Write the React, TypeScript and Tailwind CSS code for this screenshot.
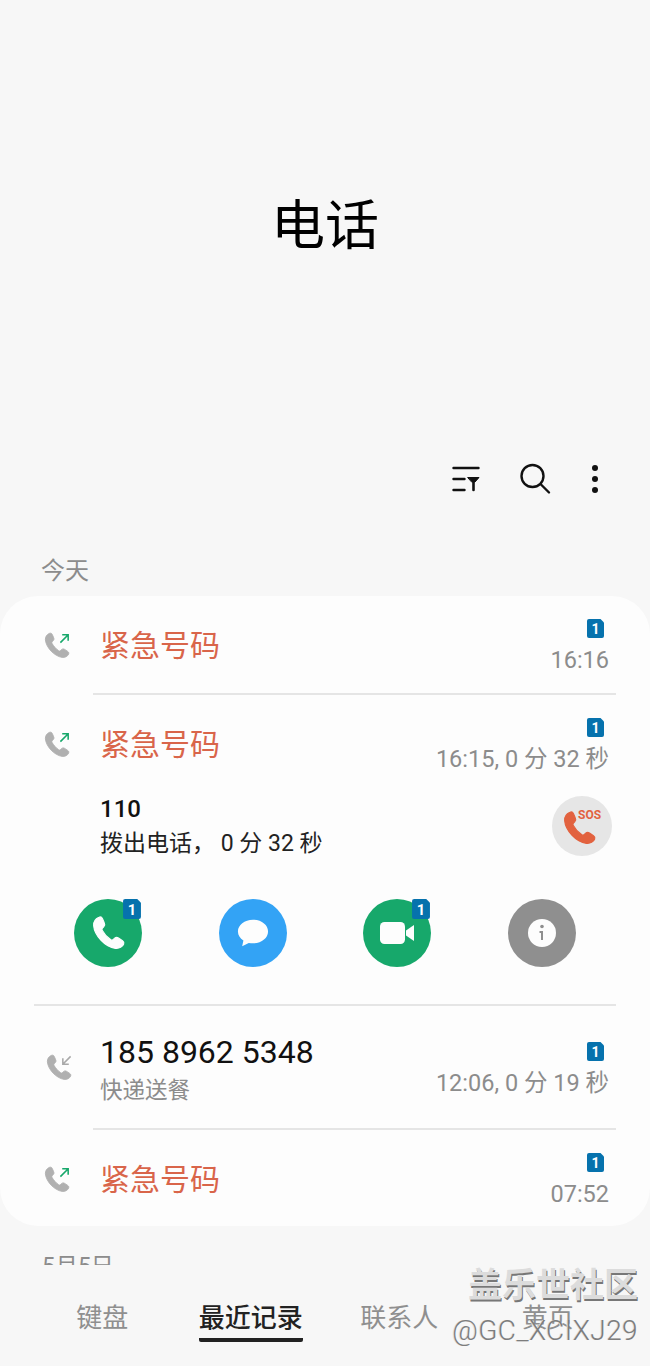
import React from 'react';

const font = { fontFamily: 'Roboto, "Noto Sans CJK SC", sans-serif' };

function Handset({ color, className }: { color: string; className?: string }) {
  return (
    <svg viewBox="0 0 24 24" className={className} fill="none">
      <path d="M6.600 2.600C4.600 3.500 3.200 5.200 3.400 7.600 3.900 13.600 10.400 20.400 16.400 21.200 18.800 21.500 20.800 20.200 21.400 18.600 21.700 17.800 21.400 17.100 20.700 16.600L18.300 15C17.500 14.500 16.700 14.500 16 15.100L14.900 16.100C14.500 16.400 14.100 16.400 13.700 16.100 11.600 14.600 9.600 12.400 8.500 10.300 8.300 9.900 8.300 9.500 8.700 9.100L9.500 8.200C10.100 7.600 10.200 6.800 9.800 6L8.700 3.400C8.300 2.600 7.400 2.200 6.600 2.600Z" fill={color} stroke={color} strokeWidth="0.700" strokeLinejoin="round" />
    </svg>
  );
}

function CallIcon({ incoming }: { incoming?: boolean }) {
  return (
    <div className="relative w-[26px] h-[26px] shrink-0">
      <Handset color="#b0b0b0" className="absolute left-[-3px] top-[-2px] w-[31px] h-[31px]" />
      <svg viewBox="0 0 12 12" className="absolute right-0 top-[1px] w-[11px] h-[11px]" fill="none" strokeWidth="1.700" stroke={incoming ? '#a9a9a9' : '#17a86b'}>
        {incoming ? <path d="M10.500 1.500 2.500 9.500M2 3.500v6.500h6.500" /> : <path d="M1.500 10.500l8-8M3.500 2h6.500v6.500" />}
      </svg>
    </div>
  );
}

function Sim({ className }: { className?: string }) {
  return (
    <svg viewBox="0 0 17 19" className={className}>
      <path d="M2 0H13.500L17 3.500V17a2 2 0 0 1-2 2H2a2 2 0 0 1-2-2V2a2 2 0 0 1 2-2Z" fill="#0672ad" />
      <text x="8.500" y="15" textAnchor="middle" fontSize="14" fontWeight="700" fill="#fff" fontFamily="Roboto, sans-serif">1</text>
    </svg>
  );
}

function Meta({ time }: { time: string }) {
  return (
    <div className="flex flex-col items-end shrink-0 mt-[3px]">
      <Sim className="w-[17px] h-[19px] mr-[5px]" />
      <div className="text-[23.500px] leading-[28px] mt-[8px] text-[#8c8c8c]">{time}</div>
    </div>
  );
}

function Emergency({ time, height }: { time: string; height: string }) {
  return (
    <div className={`flex items-center pl-[44px] pr-[41px] ${height}`}>
      <CallIcon />
      <div className="ml-[30px] mt-[2px] flex-1 text-[30px] leading-[40px] text-[#d9654a]">紧急号码</div>
      <Meta time={time} />
    </div>
  );
}

function Action({ bg, sim, children }: { bg: string; sim?: boolean; children: React.ReactNode }) {
  return (
    <div className="flex justify-center">
      <div className={`relative w-[68px] h-[68px] rounded-full flex items-center justify-center ${bg}`}>
        {children}
        {sim && <Sim className="absolute right-[1px] top-0 w-[18px] h-[20px]" />}
      </div>
    </div>
  );
}

const tabs = ['键盘', '最近记录', '联系人', '黄页'];

export default function App() {
  return (
    <div className="relative h-[1366px] w-[650px] overflow-hidden bg-[#f7f7f7] text-black" style={font}>
      {/* header */}
      <div className="h-[447px] flex items-end justify-center">
        <h1 className="text-[54px] leading-[70px] mb-[185px] font-normal">电话</h1>
      </div>
      <div className="h-[64px] flex items-center justify-end pr-[38px]">
        <svg viewBox="0 0 28 26" className="w-[28px] h-[26px]" fill="#111" stroke="#111" strokeWidth="2.400" strokeLinecap="round">
          <path d="M1.500 2h25M1.500 13h11M1.500 24h11" fill="none" />
          <path d="M16 11.500h11l-4 4.500h-3Z" strokeWidth="1" />
          <path d="M21.500 15v9" fill="none" strokeWidth="2.600" />
        </svg>
        <svg viewBox="0 0 32 32" className="w-[32px] h-[32px] ml-[39px]" fill="none" stroke="#111" strokeWidth="2.400" strokeLinecap="round">
          <circle cx="13.500" cy="13" r="11" />
          <path d="M22 21.500l8 8" />
        </svg>
        <div className="ml-[41px] w-[6px] flex flex-col gap-[5px] mr-[14px]">
          <div className="w-[6px] h-[6px] rounded-full bg-[#111]" />
          <div className="w-[6px] h-[6px] rounded-full bg-[#111]" />
          <div className="w-[6px] h-[6px] rounded-full bg-[#111]" />
        </div>
      </div>
      <div className="h-[85px] flex items-end pl-[41px] pb-[8px] text-[24px] leading-[34px] text-[#8c8c8c]">今天</div>

      {/* call log */}
      <div className="h-[630px] bg-[#fdfdfd] rounded-[38px] overflow-hidden">
        <Emergency time="16:16" height="h-[97px]" />
        <div className="ml-[93px] mr-[34px] h-[2px] bg-[#e5e5e5]" />
        <Emergency time="16:15, 0 分 32 秒" height="h-[97px]" />
        <div className="flex items-center pl-[100px] pr-[38px] h-[68px]">
          <div className="flex-1">
            <div className="text-[24px] leading-[34px] font-medium text-[#111]">110</div>
            <div className="text-[23px] leading-[34px] mt-[1px] text-[#222]">拨出电话， 0 分 32 秒</div>
          </div>
          <div className="relative w-[60px] h-[60px] rounded-full bg-[#e6e6e6]">
            <Handset color="#e2623f" className="absolute left-[7px] top-[12px] w-[40px] h-[40px]" />
            <span className="absolute left-[26px] top-[12px] text-[12px] leading-[14px] font-bold text-[#e2623f]">SOS</span>
          </div>
        </div>
        <div className="grid grid-cols-4 mx-[36px] mt-[39px]">
          <Action bg="bg-[#17a86b]" sim>
            <Handset color="#fdfdfd" className="w-[40px] h-[40px]" />
          </Action>
          <Action bg="bg-[#33a3f5]">
            <svg viewBox="0 0 34 30" className="w-[32px] h-[30px]">
              <path d="M17 1C8 1 1 6.500 1 13.500 1 17.500 3.300 20.800 6.800 23L5.500 29 12.500 25.500C14 25.800 15.500 26 17 26 26 26 33 20.500 33 13.500S26 1 17 1Z" fill="#fdfdfd" />
            </svg>
          </Action>
          <Action bg="bg-[#17a86b]" sim>
            <svg viewBox="0 0 34 22" className="w-[34px] h-[22px]">
              <rect x="0" y="0" width="25" height="22" rx="4.500" fill="#fdfdfd" />
              <path d="M26 8.500 34 3V19L26 13.500Z" fill="#fdfdfd" />
            </svg>
          </Action>
          <Action bg="bg-[#8f8f8f]">
            <svg viewBox="0 0 28 28" className="w-[28px] h-[28px]">
              <circle cx="14" cy="14" r="14" fill="#fdfdfd" />
              <circle cx="14" cy="7.500" r="1.800" fill="#8f8f8f" />
              <path d="M11.500 12H15V21H13V14H11.500Z" fill="#8f8f8f" />
            </svg>
          </Action>
        </div>
        <div className="mx-[34px] mt-[37px] h-[2px] bg-[#e5e5e5]" />
        <div className="flex items-center pl-[46px] pr-[41px] h-[122px]">
          <CallIcon incoming />
          <div className="ml-[28px] flex-1 mt-[4px]">
            <div className="text-[32px] leading-[40px] text-[#111]">185 8962 5348</div>
            <div className="text-[22.500px] leading-[32px] mt-[2px] text-[#8c8c8c]">快递送餐</div>
          </div>
          <div className="mt-[1px]">
            <Meta time="12:06, 0 分 19 秒" />
          </div>
        </div>
        <div className="ml-[93px] mr-[34px] h-[2px] bg-[#e5e5e5]" />
        <Emergency time="07:52" height="h-[97px]" />
      </div>

      <div className="h-[39px] overflow-hidden pl-[42px] pt-[24px] text-[23px] leading-[34px] text-[#8c8c8c]">5月5日</div>

      {/* bottom tabs */}
      <div className="grid grid-cols-4 px-[28px] pt-[35px]">
        {tabs.map((t) => (
          <div key={t} className="flex justify-center">
            {t === '最近记录' ? (
              <div className="text-[26px] leading-[36px] font-medium text-[#222] border-b-[4px] border-[#222] rounded-b-[2px] pb-[2px]">{t}</div>
            ) : (
              <div className="text-[26px] leading-[36px] text-[#8f8f8f]">{t}</div>
            )}
          </div>
        ))}
      </div>

      {/* watermark */}
      <div className="absolute right-[12px] top-[1264px] text-right pointer-events-none">
        <div className="text-[34px] leading-[42px] font-bold text-[#dcdcdc] [text-shadow:1px_2px_0_#777]">盖乐世社区</div>
        <div className="text-[28px] leading-[34px] mt-[8px] font-light text-[#7d7d7d] [text-shadow:-1px_0_0_#e0e0e0] tracking-[0.4px]">@GC_XCIXJ29</div>
      </div>
    </div>
  );
}
